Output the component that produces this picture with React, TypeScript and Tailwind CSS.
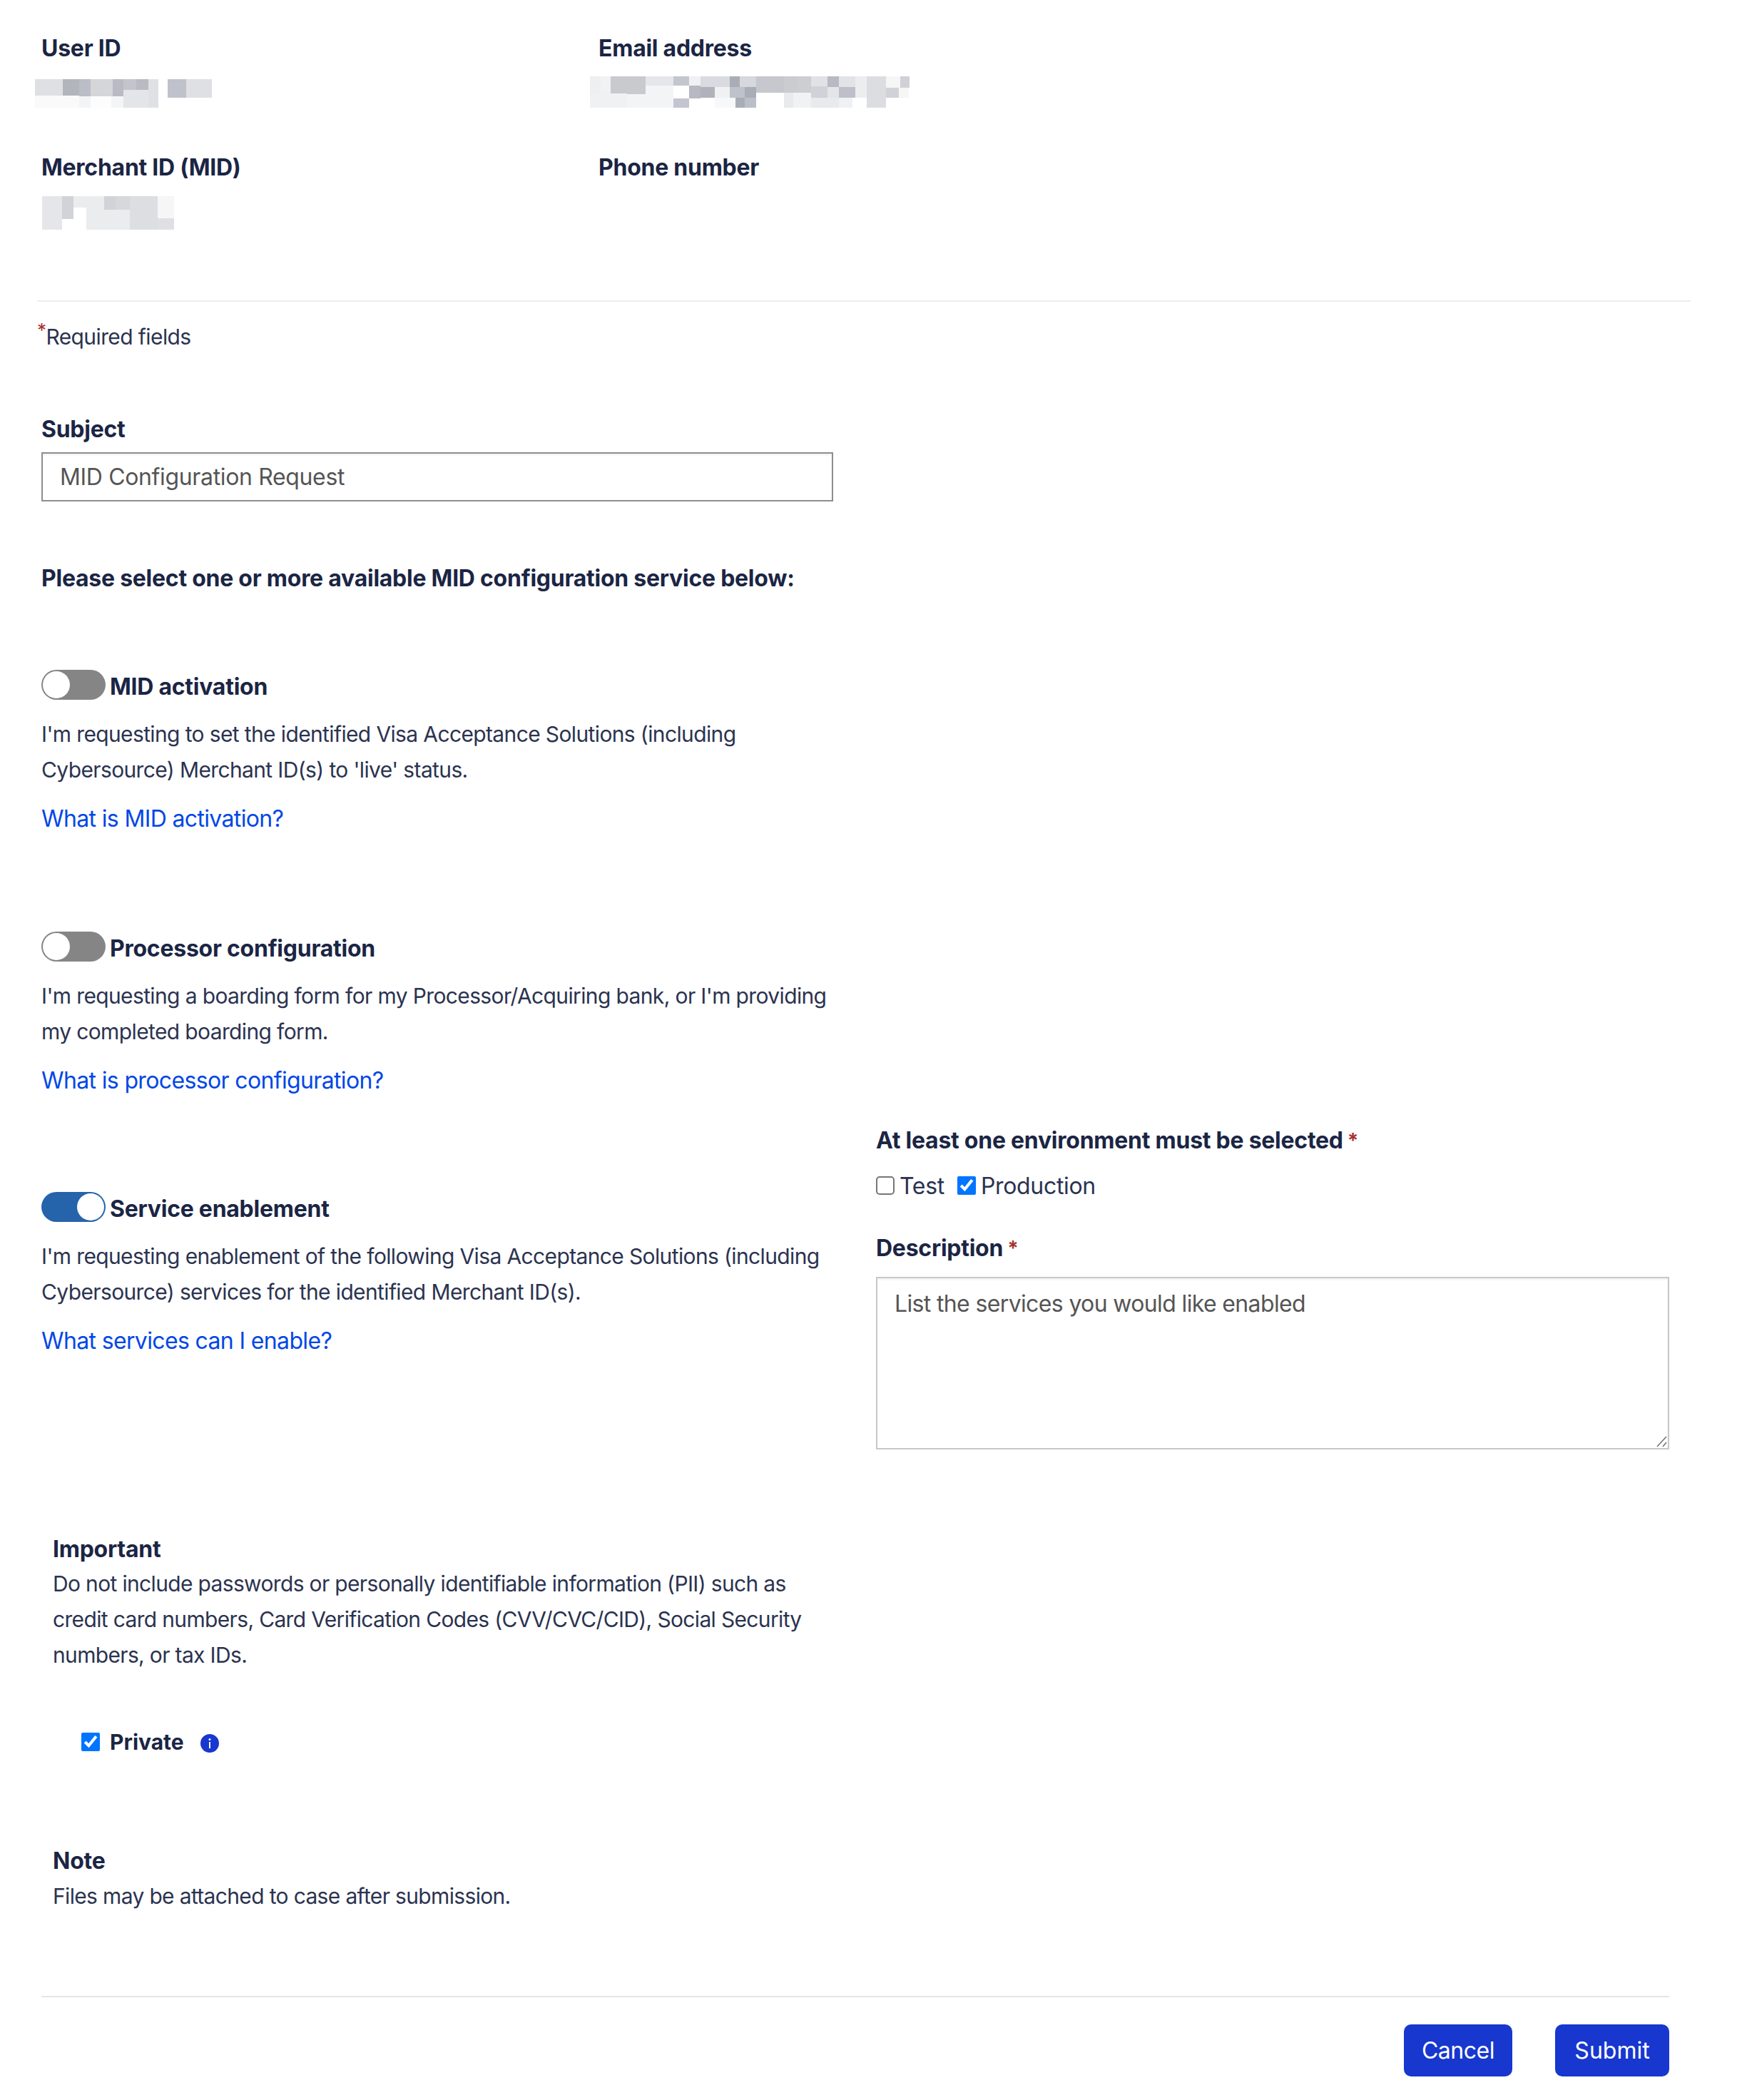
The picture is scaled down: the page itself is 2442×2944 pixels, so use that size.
import React from "react";

type Cell = [number, number, number, number, string];

// redacted values are mosaics in the screenshot; coords are x1,y1,x2,y2 in 3x px
const userMosaic: Cell[] = [
  [27, 63, 144, 132, "#dfe0e4"], [144, 63, 213, 132, "#b3b5bd"], [213, 63, 261, 135, "#bbbec6"],
  [261, 63, 354, 135, "#d5d6da"], [354, 63, 399, 135, "#b9bbc4"], [399, 63, 453, 108, "#c3c5cd"],
  [453, 63, 504, 108, "#b9bac3"], [504, 63, 546, 183, "#e0e1e5"], [399, 108, 504, 183, "#e4e5e8"],
  [27, 132, 213, 183, "#fafafa"], [213, 135, 261, 183, "#f3f4f6"], [261, 135, 348, 183, "#fdfdfd"],
  [348, 135, 399, 183, "#f4f5f7"], [585, 63, 663, 141, "#bfc2ca"], [663, 63, 771, 141, "#dfe0e4"],
];

const emailMosaic: Cell[] = [
  [21, 51, 66, 123, "#eeeff1"], [66, 51, 108, 123, "#f1f2f3"], [108, 51, 255, 126, "#c9cace"],
  [255, 51, 372, 90, "#e5e6e9"], [255, 90, 372, 126, "#f3f4f6"], [21, 123, 177, 183, "#f0f1f3"],
  [177, 126, 372, 183, "#f3f4f6"], [372, 51, 438, 90, "#c3c6ce"], [372, 144, 438, 183, "#c3c6ce"],
  [438, 51, 486, 90, "#f0f1f3"], [438, 90, 486, 144, "#b6b9c2"], [486, 96, 546, 141, "#afb2bb"],
  [486, 51, 609, 96, "#dadbe0"], [546, 96, 609, 141, "#f0f1f3"], [546, 141, 633, 183, "#f7f8f9"],
  [609, 51, 651, 96, "#a9adb6"], [651, 51, 720, 96, "#d6d8dd"], [609, 96, 672, 141, "#bfc2ca"],
  [672, 96, 720, 141, "#a9adb6"], [633, 141, 672, 183, "#a9adb6"], [672, 141, 720, 183, "#bcbfc7"],
  [720, 51, 837, 120, "#c7c8cd"], [837, 51, 894, 120, "#cbccd0"], [894, 51, 951, 120, "#cdced2"],
  [837, 120, 876, 183, "#e9eaed"], [876, 120, 951, 183, "#f1f2f4"], [951, 51, 1020, 93, "#e1e2e5"],
  [951, 93, 1020, 141, "#d1d2d7"], [951, 141, 1068, 183, "#e9eaed"], [1020, 51, 1068, 96, "#b8bac3"],
  [1020, 96, 1068, 141, "#e4e5e8"], [1068, 51, 1137, 96, "#e2e3e7"], [1068, 96, 1137, 141, "#bdc0c9"],
  [1068, 141, 1125, 183, "#f0f1f3"], [1137, 51, 1185, 141, "#ecedef"], [1185, 51, 1266, 183, "#dcdde1"],
  [1266, 51, 1326, 99, "#f6f6f7"], [1326, 51, 1365, 99, "#d0d1d7"], [1266, 99, 1320, 141, "#d1d2d7"],
  [1320, 99, 1362, 141, "#f6f6f7"],
];

const midMosaic: Cell[] = [
  [57, 45, 141, 186, "#e5e6ea"], [141, 45, 189, 141, "#d2d3d8"], [189, 45, 318, 93, "#ebecee"],
  [243, 93, 318, 186, "#ebecee"], [318, 102, 426, 186, "#ebecee"], [318, 45, 366, 102, "#d2d3d8"],
  [366, 45, 426, 102, "#d7d8dc"], [426, 45, 543, 186, "#dddee2"], [543, 45, 612, 138, "#f6f6f7"],
  [543, 138, 612, 186, "#dfe0e4"],
];

function Mosaic({ cells, x, y, w, h, className }: { cells: Cell[]; x: number; y: number; w: number; h: number; className: string }) {
  return (
    <svg viewBox={`${x} ${y} ${w * 3} ${h * 3}`} width={w} height={h} className={className} shapeRendering="crispEdges">
      {cells.map((c, i) => (
        <rect key={i} x={c[0]} y={c[1]} width={c[2] - c[0]} height={c[3] - c[1]} fill={c[4]} />
      ))}
    </svg>
  );
}

function Toggle({ on }: { on?: boolean }) {
  if (on) {
    return (
      <div className="w-[90px] h-[42px] rounded-full bg-[#2563ab] flex justify-end items-center pr-[2px] shrink-0">
        <div className="w-[38px] h-[38px] rounded-full bg-white" />
      </div>
    );
  }
  return (
    <div className="w-[90px] h-[42px] rounded-full bg-[#858585] flex items-center pl-[2px] shrink-0">
      <div className="w-[38px] h-[38px] rounded-full bg-white" />
    </div>
  );
}

function Service({ on, title, text, link, className }: { on?: boolean; title: string; text: string; link: string; className: string }) {
  return (
    <div className={className}>
      <div className="flex items-start h-[50px] gap-[6px]">
        <Toggle on={on} />
        <span className="text-[32px] leading-[47px] font-bold text-[#1b2544] tracking-[-0.008em]">{title}</span>
      </div>
      <p className="mt-[15px] text-[30px] leading-[50px] text-[#2b3350] tracking-[-0.021em]">{text}</p>
      <a className="block mt-[19px] text-[32px] leading-[50px] text-[#0047e6] tracking-[-0.02em]">{link}</a>
    </div>
  );
}

export default function App() {
  return (
    <div className="w-[2442px] h-[2944px] bg-white pl-[58px] pr-[102px] pt-[48px] font-['Inter',sans-serif]">
      <div className="grid grid-cols-[781px_1fr] text-[32px] leading-[40px] font-bold text-[#1b2544] tracking-[-0.008em]">
        <div className="h-[167px]">
          User ID
          <Mosaic cells={userMosaic} x={27} y={63} w={248} h={40} className="ml-[-9px] mt-[23px]" />
        </div>
        <div className="h-[167px]">
          Email address
          <Mosaic cells={emailMosaic} x={21} y={51} w={448} h={44} className="ml-[-12px] mt-[19px]" />
        </div>
        <div>
          Merchant ID (MID)
          <Mosaic cells={midMosaic} x={57} y={45} w={185} h={47} className="ml-[1px] mt-[20px]" />
        </div>
        <div>Phone number</div>
      </div>

      <div className="h-[2px] bg-[#eeeeee] ml-[-6px] mr-[-30px] mt-[99px]" />

      <p className="mt-[24px] ml-[-6px] text-[30px] leading-[50px] text-[#2b3350] tracking-[-0.02em]">
        <span className="text-[#a83232] align-super text-[26px] leading-none">*</span>Required fields
      </p>

      <div className="grid grid-cols-[1110px_1112px] gap-x-[60px] mt-[85px]">
        <div>
          <label className="block text-[32px] leading-[40px] font-bold text-[#1b2544] tracking-[-0.008em]">Subject</label>
          <input
            readOnly
            value="MID Configuration Request"
            className="block mt-[12px] w-full h-[69px] border-2 border-[#8e8e8e] px-[24px] text-[32px] text-[#555555] tracking-[-0.011em] outline-none shadow-[inset_0_2px_3px_rgba(0,0,0,0.06)]"
          />
          <p className="mt-[88px] text-[32px] leading-[40px] font-bold text-[#1b2544] tracking-[-0.008em]">
            Please select one or more available MID configuration service below:
          </p>
          <Service
            className="mt-[108px]"
            title="MID activation"
            text="I'm requesting to set the identified Visa Acceptance Solutions (including Cybersource) Merchant ID(s) to 'live' status."
            link="What is MID activation?"
          />
          <Service
            className="mt-[133px]"
            title="Processor configuration"
            text="I'm requesting a boarding form for my Processor/Acquiring bank, or I'm providing my completed boarding form."
            link="What is processor configuration?"
          />
          <Service
            on
            className="mt-[131px]"
            title="Service enablement"
            text="I'm requesting enablement of the following Visa Acceptance Solutions (including Cybersource) services for the identified Merchant ID(s)."
            link="What services can I enable?"
          />
        </div>

        <div className="mt-[997px]">
          <p className="text-[32px] leading-[40px] font-bold text-[#1b2544] tracking-[-0.008em]">
            At least one environment must be selected
            <span className="text-[#a83232] text-[28px] font-bold align-top ml-[6px]">*</span>
          </p>
          <div className="flex items-center h-[50px] mt-[19px] text-[32px] text-[#2b3350] tracking-[-0.01em]">
            <input type="checkbox" readOnly className="appearance-none w-[26px] h-[26px] m-0 bg-white border-2 border-[#767676] rounded-[5px] mt-[-2px]" />
            <span className="ml-[7px]">Test</span>
            <input type="checkbox" checked readOnly className="w-[26px] h-[26px] m-0 ml-[18px] mt-[-2px]" />
            <span className="ml-[7px]">Production</span>
          </div>
          <p className="mt-[42px] text-[32px] leading-[40px] font-bold text-[#1b2544] tracking-[-0.008em]">
            Description
            <span className="text-[#a83232] text-[28px] font-bold align-top ml-[6px]">*</span>
          </p>
          <div className="relative mt-[20px]">
            <textarea
              readOnly
              placeholder="List the services you would like enabled"
              className="block resize-none w-full h-[242px] border-2 border-[#c8c8c8] px-[24px] py-[14px] text-[32px] leading-[44px] tracking-[-0.02em] placeholder:text-[#555555] outline-none shadow-[inset_0_2px_3px_rgba(0,0,0,0.06)]"
            />
            <svg viewBox="0 0 16 16" className="absolute right-[3px] bottom-[3px] w-[16px] h-[16px]">
              <path d="M2 15 15 1M10 15l5-6" stroke="#666666" strokeWidth="1.3" fill="none" />
            </svg>
          </div>
        </div>
      </div>

      <div className="mt-[120px] ml-[16px] w-[1090px] text-[30px] text-[#2b3350] tracking-[-0.022em]">
        <p className="text-[32px] leading-[40px] font-bold text-[#1b2544] tracking-[-0.008em]">Important</p>
        <p className="mt-[3px] leading-[50px]">
          Do not include passwords or personally identifiable information (PII) such as credit card numbers, Card Verification Codes (CVV/CVC/CID), Social Security numbers, or tax IDs.
        </p>
      </div>

      <div className="flex items-center h-[40px] mt-[77px] ml-[56px]">
        <input type="checkbox" checked readOnly className="w-[26px] h-[26px] m-0" />
        <span className="ml-[14px] text-[30px] font-bold text-[#1b2544]">Private</span>
        <svg viewBox="0 0 26 26" className="w-[26px] h-[26px] ml-[23px] mt-[4px]">
          <circle cx="13" cy="13" r="13" fill="#1737cf" />
          <rect x="12" y="11" width="2" height="9" fill="#fff" />
          <circle cx="13" cy="7.5" r="1.5" fill="#fff" />
        </svg>
      </div>

      <div className="mt-[127px] ml-[16px] text-[30px] text-[#2b3350] tracking-[-0.022em]">
        <p className="text-[32px] leading-[40px] font-bold text-[#1b2544] tracking-[-0.008em]">Note</p>
        <p className="mt-[4px] leading-[50px]">Files may be attached to case after submission.</p>
      </div>

      <div className="h-[2px] bg-[#e6e6e6] mt-[115px]" />

      <div className="flex justify-end gap-[60px] mt-[38px]">
        <button className="w-[152px] h-[73px] rounded-[10px] bg-[#1737cf] text-white text-[32px] tracking-[-0.015em]">Cancel</button>
        <button className="w-[160px] h-[73px] rounded-[10px] bg-[#1737cf] text-white text-[32px]">Submit</button>
      </div>
    </div>
  );
}
